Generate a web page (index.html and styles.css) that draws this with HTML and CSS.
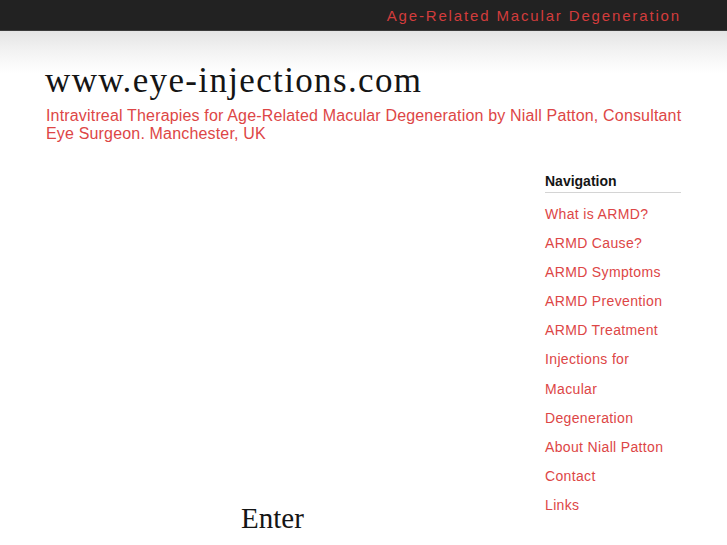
FILE: index.html
```html
<!DOCTYPE html>
<html>
<head>
<meta charset="utf-8">
<link rel="stylesheet" href="styles.css">
</head>
<body>
<div class="topbar"><span class="toptitle">Age-Related Macular Degeneration</span></div>
<div class="band">
  <div class="wrap">
    <div class="logo">www.eye-injections.com</div>
    <div class="subtitle">Intravitreal Therapies for Age-Related Macular Degeneration by Niall Patton, Consultant Eye Surgeon. Manchester, UK</div>
    <div class="cols">
      <div class="main">
        <div class="enter">Enter</div>
      </div>
      <div class="side">
        <div class="navhead">Navigation</div>
        <ul class="nav">
          <li><a href="#">What is ARMD?</a></li>
          <li><a href="#">ARMD Cause?</a></li>
          <li><a href="#">ARMD Symptoms</a></li>
          <li><a href="#">ARMD Prevention</a></li>
          <li><a href="#">ARMD Treatment</a></li>
          <li><a href="#">Injections for Macular Degeneration</a></li>
          <li><a href="#">About Niall Patton</a></li>
          <li><a href="#">Contact</a></li>
          <li><a href="#">Links</a></li>
        </ul>
      </div>
    </div>
  </div>
</div>
</body>
</html>
```
FILE: styles.css
```css
html, body { margin: 0; padding: 0; background: #fff; }
body { font-family: "Liberation Sans", Arial, sans-serif; }
.topbar {
  height: 30px;
  background: #222222;
  display: flex;
  justify-content: flex-end;
  align-items: center;
  padding-right: 46px;
  border-bottom: 1px solid #3a3a3a;
}
.toptitle {
  color: #d23c3c;
  font-size: 15px;
  letter-spacing: 1.85px;
}
.band {
  background: linear-gradient(to bottom, #e4e4e4 0px, #f4f4f4 22px, #ffffff 42px);
}
.wrap {
  width: 635px;
  margin-left: 46px;
  padding-top: 30px;
}
.logo {
  font-family: "Liberation Serif", "Times New Roman", serif;
  font-size: 35px;
  line-height: 40px;
  color: #151515;
  letter-spacing: 1.35px;
  margin-left: -1px;
}
.subtitle {
  color: #dd4646;
  font-size: 16px;
  line-height: 18px;
  letter-spacing: 0.17px;
  margin-top: 6px;
  margin-right: -12px;
}
.cols {
  display: flex;
  justify-content: space-between;
  margin-top: 30px;
}
.main {
  width: 453px;
  display: flex;
  flex-direction: column;
  align-items: center;
}
.enter {
  font-family: "Liberation Serif", "Times New Roman", serif;
  font-size: 29px;
  color: #151515;
  line-height: 30px;
  margin-top: 330px;
}
.side { width: 136px; }
.navhead {
  font-weight: bold;
  font-size: 14px;
  color: #151515;
  padding-bottom: 3px;
  border-bottom: 1px solid #d4d4d4;
}
.nav {
  list-style: none;
  margin: 7px 0 0 0;
  padding: 0;
}
.nav li {
  font-size: 14px;
  line-height: 29.1px;
  letter-spacing: 0.35px;
}
.nav a { color: #dd4646; text-decoration: none; }
```
